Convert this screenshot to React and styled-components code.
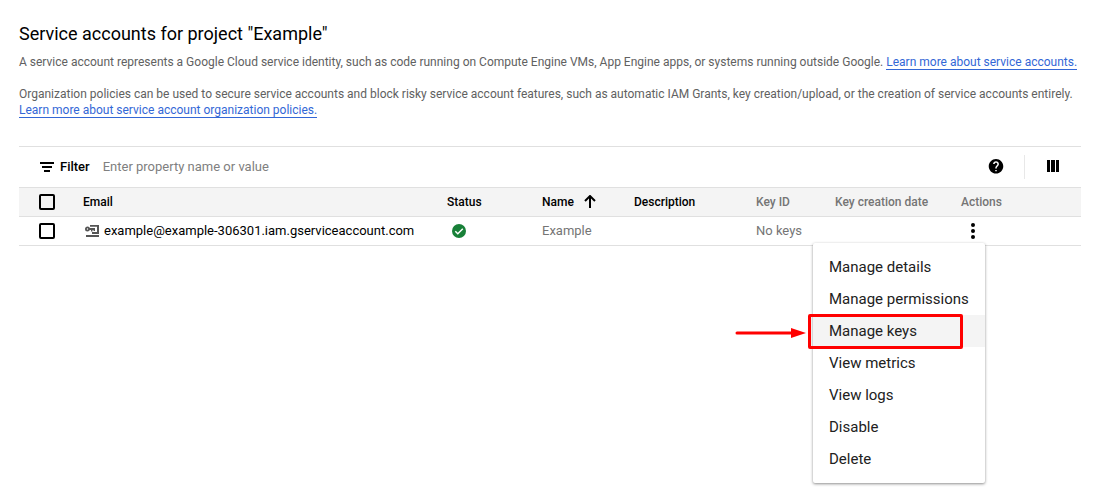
import React from "react";
import styled, { createGlobalStyle } from "styled-components";

const GlobalStyle = createGlobalStyle`
  * { box-sizing: border-box; }
  body {
    margin: 0;
    background: #fff;
    color: #000;
    font-family: Roboto, "Liberation Sans", sans-serif;
    font-size: 13px;
  }
`;

const Page = styled.main`
  min-height: 100vh;
  padding: 24px 23px 8px 19px;
`;

const Title = styled.h1`
  margin: 0 0 10px;
  font-size: 18px;
  font-weight: 400;
  line-height: 20px;
`;

const Intro = styled.p`
  margin: 0 0 16px;
  color: #616161;
  font-size: 12px;
  line-height: 16px;
`;

const TextLink = styled.a`
  color: #3367d6;
  text-decoration: none;
  border-bottom: 1px solid #3367d6;
`;

const Panel = styled.section`
  margin-top: 28px;
  border-top: 1px solid #e0e0e0;
`;

const Toolbar = styled.div`
  display: flex;
  align-items: center;
  height: 40px;
  padding: 0 20px 0 21px;
`;

const FilterLabel = styled.label`
  display: flex;
  align-items: center;
  gap: 6px;
  font-weight: 500;
  line-height: 16px;
`;

const FilterInput = styled.input`
  flex: 1;
  min-width: 0;
  margin-left: 13px;
  padding: 0;
  border: 0;
  outline: 0;
  background: transparent;
  font: inherit;
  line-height: 16px;
  &::placeholder { color: #808080; opacity: 1; }
`;

const IconButton = styled.button`
  display: flex;
  align-items: center;
  justify-content: center;
  width: ${(p) => p.$width || 16}px;
  height: 20px;
  padding: 0;
  border: 0;
  background: transparent;
  color: #000;
  cursor: pointer;
`;

const Divider = styled.span`
  width: 1px;
  height: 24px;
  margin: 0 20px;
  background: #e8e8e8;
`;

const Table = styled.table`
  width: 100%;
  table-layout: fixed;
  border-collapse: separate;
  border-spacing: 0;
`;

const Col = styled.col`
  width: ${(p) => p.$width}px;
`;

const HeadCell = styled.th`
  height: 30px;
  padding: 0 0 0 8px;
  border-top: 1px solid #e0e0e0;
  border-bottom: 1px solid #e0e0e0;
  background: #f4f4f4;
  color: ${(p) => (p.$muted ? "#757575" : "#000")};
  font-size: 12px;
  font-weight: 500;
  line-height: 16px;
  text-align: left;
  white-space: nowrap;
`;

const Cell = styled.td`
  position: relative;
  height: 29px;
  padding: 0 0 0 8px;
  border-bottom: 1px solid #e0e0e0;
  color: ${(p) => (p.$strong ? "#000" : "#757575")};
  line-height: 16px;
  white-space: nowrap;
`;

const Inline = styled.span`
  display: flex;
  align-items: center;
  gap: ${(p) => p.$gap}px;
`;

const AccountName = styled(Inline)`
  padding-left: 2px;
`;

const Checkbox = styled.input`
  appearance: none;
  display: block;
  width: 16px;
  height: 16px;
  margin: 0 0 0 12px;
  border: 2px solid #000;
  border-radius: 2px;
  background: transparent;
  &:checked { background: #3367d6; }
`;

const StatusIcon = styled.span`
  display: flex;
  padding-left: 5px;
`;

const Menu = styled.ul`
  position: absolute;
  z-index: 1;
  top: 26px;
  right: 96px;
  width: 172px;
  margin: 0;
  padding: 8px 0;
  list-style: none;
  background: #fff;
  border-radius: 2px;
  box-shadow: 0 1px 3px rgba(0, 0, 0, 0.45);
`;

const MenuItem = styled.li`
  position: relative;
  background: ${(p) => (p.$active ? "#f4f4f4" : "transparent")};
`;

const MenuButton = styled.button`
  display: block;
  width: 100%;
  height: 32px;
  padding: 0 16px;
  border: 0;
  background: transparent;
  color: #212121;
  font: inherit;
  font-size: 15px;
  line-height: 32px;
  text-align: left;
  cursor: pointer;
`;

const Highlight = styled.span`
  position: absolute;
  top: -1px;
  right: 22px;
  bottom: -2px;
  left: -5px;
  border: 3px solid #f00;
  border-radius: 2px;
  pointer-events: none;
`;

const Arrow = styled.svg`
  position: absolute;
  top: 12px;
  right: 179px;
  pointer-events: none;
`;

const FilterIcon = () => (
  <svg width="14" height="12" viewBox="0 0 14 12" aria-hidden="true">
    <path d="M0 1h14v2H0zM2 5h10v2H2zM4 9h6v2H4z" fill="#000" />
  </svg>
);

const HelpIcon = () => (
  <svg width="16" height="16" viewBox="1 2 22 22" aria-hidden="true">
    <path
      d="M12 2C6.480 2 2 6.480 2 12s4.480 10 10 10 10-4.480 10-10S17.520 2 12 2zm1 17h-2v-2h2v2zm2.070-7.750-.9.920C13.450 12.900 13 13.500 13 15h-2v-.5c0-1.100.45-2.100 1.170-2.830l1.240-1.260c.37-.36.59-.86.59-1.410 0-1.100-.9-2-2-2s-2 .9-2 2H8c0-2.210 1.790-4 4-4s4 1.790 4 4c0 .88-.36 1.680-.93 2.250z"
      fill="#000"
    />
  </svg>
);

const ColumnsIcon = () => (
  <svg width="12" height="14" viewBox="0 0 12 14" aria-hidden="true">
    <path d="M0 0h3v12H0zM4 0h4v12H4zM9 0h3v12H9z" fill="#000" />
  </svg>
);

const SortIcon = () => (
  <svg width="12" height="14" viewBox="0 0 12 14" aria-hidden="true">
    <path d="M6 13V2M1 6l5-5 5 5" fill="none" stroke="#000" strokeWidth="2" />
  </svg>
);

const AccountIcon = () => (
  <svg width="14" height="12" viewBox="0 0 14 12" aria-hidden="true">
    <circle cx="2.500" cy="4" r="1.600" fill="none" stroke="#555" strokeWidth="1.800" />
    <path
      d="M4 3h6v3H8.500V5H7.500v1.500H6V5H4zM5 0h9v9H7V7h5V1.800H5zM1 10h13v2H1z"
      fill="#555"
    />
  </svg>
);

const CheckIcon = () => (
  <svg width="14" height="14" viewBox="0 0 14 14" role="img" aria-label="Enabled">
    <circle cx="7" cy="7" r="7" fill="#188038" />
    <path d="M3.300 7.200l2.500 2.500 5-5" fill="none" stroke="#fff" strokeWidth="1.500" />
  </svg>
);

const MoreIcon = () => (
  <svg width="4" height="16" viewBox="0 0 4 16" aria-hidden="true">
    <circle cx="2" cy="2" r="2" />
    <circle cx="2" cy="8" r="2" />
    <circle cx="2" cy="14" r="2" />
  </svg>
);

const actions = [
  "Manage details",
  "Manage permissions",
  "Manage keys",
  "View metrics",
  "View logs",
  "Disable",
  "Delete",
];

export default function App() {
  return (
    <Page>
      <GlobalStyle />
      <Title>Service accounts for project "Example"</Title>
      <Intro>
        A service account represents a Google Cloud service identity, such as code running on
        Compute Engine VMs, App Engine apps, or systems running outside Google.{" "}
        <TextLink href="#accounts">Learn more about service accounts.</TextLink>
      </Intro>
      <Intro>
        Organization policies can be used to secure service accounts and block risky service
        account features, such as automatic IAM Grants, key creation/upload, or the creation of
        service accounts entirely.{" "}
        <TextLink href="#policies">Learn more about service account organization policies.</TextLink>
      </Intro>
      <Panel>
        <Toolbar>
          <FilterLabel htmlFor="filter">
            <FilterIcon />
            Filter
          </FilterLabel>
          <FilterInput id="filter" placeholder="Enter property name or value" />
          <IconButton aria-label="Help">
            <HelpIcon />
          </IconButton>
          <Divider />
          <IconButton aria-label="Column display options">
            <ColumnsIcon />
          </IconButton>
        </Toolbar>
        <Table>
          <colgroup>
            <Col $width={56} />
            <col />
            <Col $width={95} />
            <Col $width={92} />
            <Col $width={122} />
            <Col $width={79} />
            <Col $width={126} />
            <Col $width={128} />
          </colgroup>
          <thead>
            <tr>
              <HeadCell>
                <Checkbox type="checkbox" aria-label="Select all rows" />
              </HeadCell>
              <HeadCell>Email</HeadCell>
              <HeadCell>Status</HeadCell>
              <HeadCell>
                <Inline $gap={10}>
                  Name
                  <SortIcon />
                </Inline>
              </HeadCell>
              <HeadCell>Description</HeadCell>
              <HeadCell $muted>Key ID</HeadCell>
              <HeadCell $muted>Key creation date</HeadCell>
              <HeadCell $muted>Actions</HeadCell>
            </tr>
          </thead>
          <tbody>
            <tr>
              <Cell>
                <Checkbox type="checkbox" aria-label="Select example service account" />
              </Cell>
              <Cell $strong>
                <AccountName $gap={5}>
                  <AccountIcon />
                  example@example-306301.iam.gserviceaccount.com
                </AccountName>
              </Cell>
              <Cell>
                <StatusIcon>
                  <CheckIcon />
                </StatusIcon>
              </Cell>
              <Cell>Example</Cell>
              <Cell />
              <Cell>No keys</Cell>
              <Cell />
              <Cell>
                <IconButton
                  $width={24}
                  aria-label="Actions"
                  aria-haspopup="menu"
                  aria-expanded="true"
                >
                  <MoreIcon />
                </IconButton>
                <Menu>
                  {actions.map((label) => {
                    const active = label === "Manage keys";
                    return (
                      <MenuItem key={label} $active={active}>
                        <MenuButton>{label}</MenuButton>
                        {active && (
                          <>
                            <Highlight />
                            <Arrow width="71" height="12" viewBox="0 0 71 12" aria-hidden="true">
                              <path d="M2 6h58" stroke="#f00" strokeWidth="3" strokeLinecap="round" />
                              <path d="M56 1l15 5-15 5z" fill="#f00" />
                            </Arrow>
                          </>
                        )}
                      </MenuItem>
                    );
                  })}
                </Menu>
              </Cell>
            </tr>
          </tbody>
        </Table>
      </Panel>
    </Page>
  );
}
